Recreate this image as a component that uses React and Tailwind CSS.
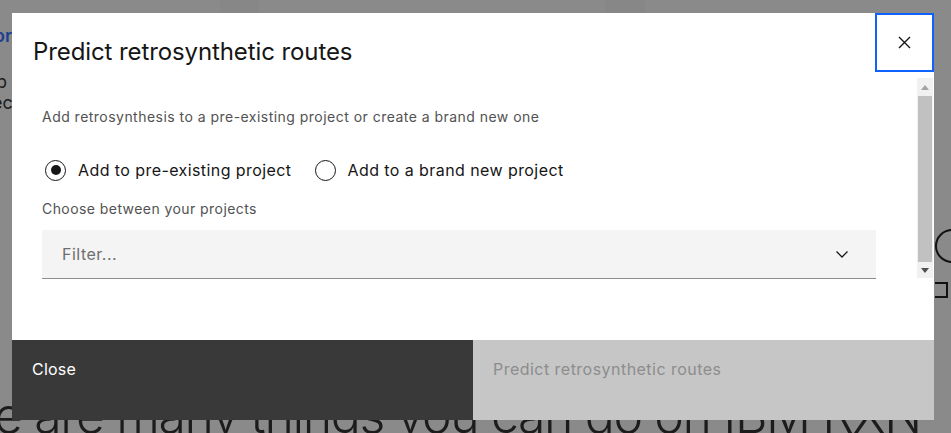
import React, { useState } from "react";

const font = { fontFamily: "Inter, 'Noto Sans', sans-serif" };

const Radio = ({ checked, label, onClick }) => (
  <button type="button" onClick={onClick} className="flex items-center gap-[12px]">
    <span className="w-[21px] h-[21px] rounded-full border border-[#161616] flex items-center justify-center">
      {checked && <span className="w-[10px] h-[10px] rounded-full bg-[#161616]" />}
    </span>
    <span className="text-[16px] tracking-[0.42px] text-[#161616] leading-[22px]">{label}</span>
  </button>
);

const Scrollbar = () => (
  <div className="w-[16px] h-full bg-[#f1f1f1] flex flex-col items-center">
    <div className="h-[18px] flex items-center justify-center">
      <svg width="8" height="5" viewBox="0 0 8 5">
        <path d="M0 5 L4 0 L8 5 Z" fill="#a3a3a3" />
      </svg>
    </div>
    <div className="w-[14px] flex-1 bg-[#c1c1c1]" />
    <div className="h-[16px] flex items-center justify-center">
      <svg width="8" height="5" viewBox="0 0 8 5">
        <path d="M0 0 L8 0 L4 5 Z" fill="#505050" />
      </svg>
    </div>
  </div>
);

const App = () => {
  const [choice, setChoice] = useState("existing");

  return (
    <div className="relative w-[951px] h-[433px] overflow-hidden bg-[#8a8a8a]" style={font}>
      {/* page behind the overlay */}
      <div className="absolute top-0 left-[220px] w-[39px] h-[13px] bg-[#878787]" />
      <div className="absolute top-0 left-[605px] w-[40px] h-[13px] bg-[#878787]" />
      <div className="absolute left-[-6px] top-[22px] text-[18px] font-semibold text-[#1d3f8f]">or</div>
      <div className="absolute left-[-4px] top-[68px] text-[18px] text-[#1c1c1c]">p</div>
      <div className="absolute left-[-8px] top-[89px] text-[18px] text-[#1c1c1c]">ec</div>
      <div className="absolute left-[935px] top-[229px] w-[34px] h-[34px] rounded-full border-2 border-[#111]" />
      <div className="absolute left-[935px] top-[282px] w-[13px] h-[16px] border-2 border-l-0 border-[#111]" />
      <div className="absolute left-[-6px] top-[390px] whitespace-nowrap text-[50px] font-light tracking-[-1.4px] text-[#1c1c1c] leading-none">
        e are many things you can do on IBM RXN
      </div>

      {/* modal */}
      <div className="absolute left-[12px] top-[13px] w-[922px] h-[407px] bg-white flex flex-col">
        <div className="relative h-[65px] pl-[21px] pt-[23px]">
          <h2 className="text-[24px] leading-[32px] tracking-[-0.1px] text-[#161616]">Predict retrosynthetic routes</h2>
          <button
            type="button"
            className="absolute top-0 right-0 w-[59px] h-[59px] border-2 border-[#0f62fe] flex items-center justify-center"
          >
            <svg width="13" height="13" viewBox="0 0 13 13">
              <path d="M1 1 L12 12 M12 1 L1 12" stroke="#161616" strokeWidth="1.4" />
            </svg>
          </button>
        </div>

        <div className="flex h-[200px]">
          <div className="flex-1 pl-[30px] pr-[41px] pt-[30px]">
            <p className="text-[14px] leading-[18px] tracking-[0.47px] text-[#525252]">
              Add retrosynthesis to a pre-existing project or create a brand new one
            </p>
            <div className="flex items-center gap-[23px] mt-[33px] pl-[3px]">
              <Radio
                checked={choice === "existing"}
                label="Add to pre-existing project"
                onClick={() => setChoice("existing")}
              />
              <Radio
                checked={choice === "new"}
                label="Add to a brand new project"
                onClick={() => setChoice("new")}
              />
            </div>
            <p className="mt-[19px] text-[14px] leading-[18px] tracking-[0.43px] text-[#525252]">Choose between your projects</p>
            <div className="mt-[12px] h-[49px] bg-[#f4f4f4] border-b border-[#8d8d8d] flex items-center justify-between pl-[20px] pr-[26px]">
              <span className="text-[16px] tracking-[0.5px] text-[#6f6f6f]">Filter...</span>
              <svg width="16" height="16" viewBox="0 0 16 16">
                <path d="M2.5 5.5 L8 11 L13.5 5.5" fill="none" stroke="#161616" strokeWidth="1.3" />
              </svg>
            </div>
          </div>
          <div className="pr-[1px]">
            <Scrollbar />
          </div>
        </div>

        <div className="flex-1" />

        <div className="flex h-[80px]">
          <div className="w-1/2 h-full bg-[#393939] text-white text-[16px] tracking-[0.2px] pl-[20px] pt-[18px] leading-[22px]">
            Close
          </div>
          <div className="w-1/2 h-full bg-[#c6c6c6] text-[#8d8d8d] text-[16px] tracking-[0.47px] pl-[20px] pt-[18px] leading-[22px] cursor-not-allowed">
            Predict retrosynthetic routes
          </div>
        </div>
      </div>
    </div>
  );
};

export default App;
